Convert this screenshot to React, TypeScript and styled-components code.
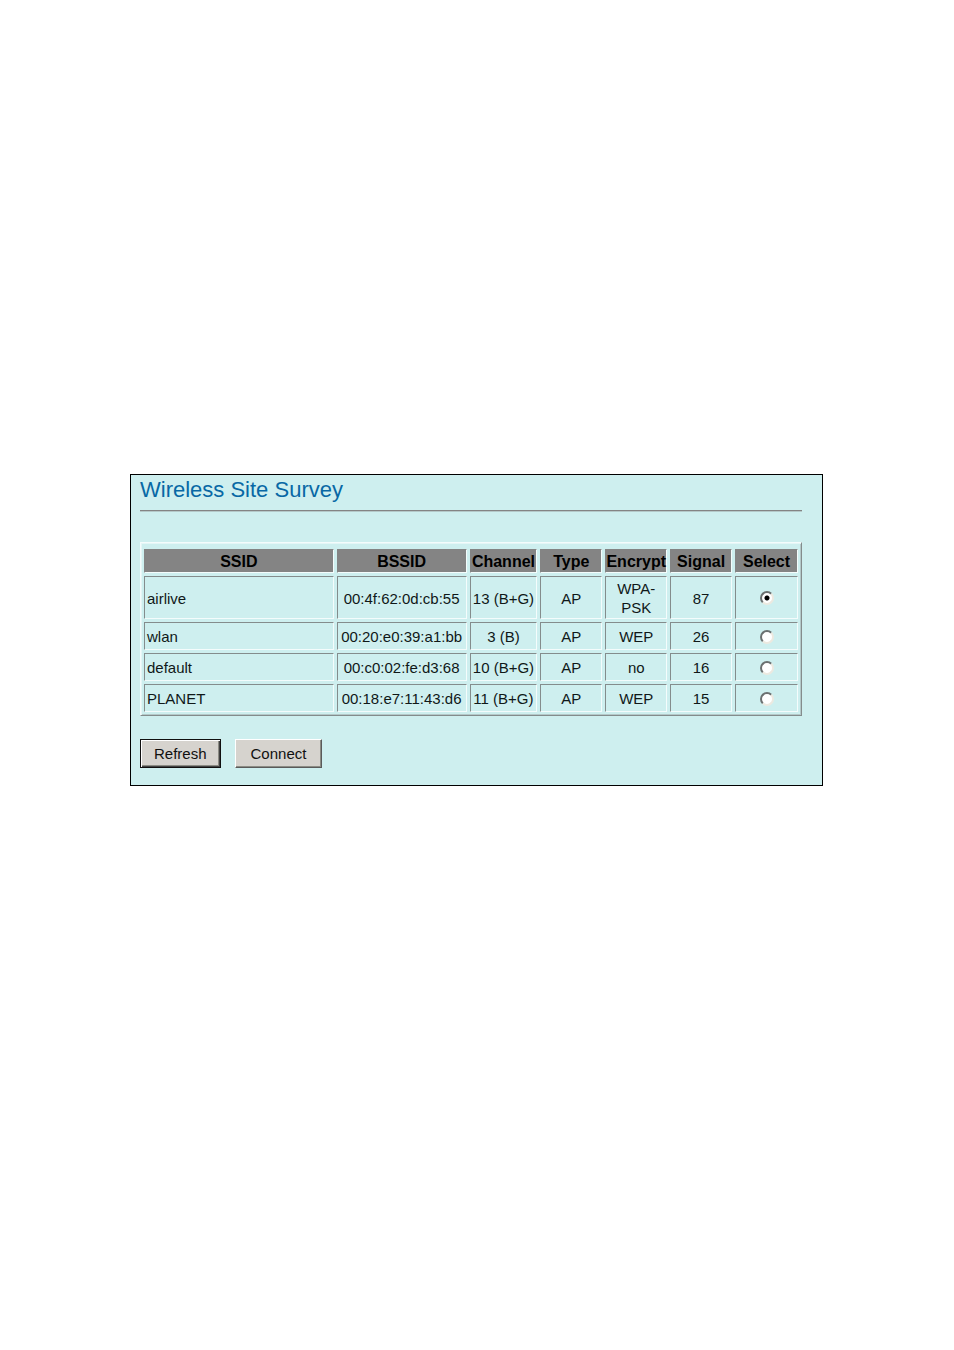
import React from 'react'
import styled, { createGlobalStyle } from 'styled-components'

interface INetwork{ssid:string,bssid:string,channel:string,type:string,encrypt:string,signal:number}

const networks:Array<INetwork> = [
  {ssid:'airlive',bssid:'00:4f:62:0d:cb:55',channel:'13 (B+G)',type:'AP',encrypt:'WPA-PSK',signal:87},
  {ssid:'wlan',bssid:'00:20:e0:39:a1:bb',channel:'3 (B)',type:'AP',encrypt:'WEP',signal:26},
  {ssid:'default',bssid:'00:c0:02:fe:d3:68',channel:'10 (B+G)',type:'AP',encrypt:'no',signal:16},
  {ssid:'PLANET',bssid:'00:18:e7:11:43:d6',channel:'11 (B+G)',type:'AP',encrypt:'WEP',signal:15}
]
const columns = [
  {title:'SSID',share:190},
  {title:'BSSID',share:130},
  {title:'Channel',share:68},
  {title:'Type',share:62},
  {title:'Encrypt',share:62},
  {title:'Signal',share:62},
  {title:'Select',share:63}
]
const totalShare = columns.reduce((sum,column)=>sum+column.share,0)

class App extends React.Component<{},{selected:string}>{
  constructor(props:any){
    super(props);
    this.state={
      selected: networks[0].bssid
    }
  }
  selectHandler(bssid:string){
    this.setState({selected:bssid})
  }
  render(){
    let rowsJSX = networks.map((network:INetwork)=>{
      return <Row key={network.bssid}>
        <Cell align="left">{network.ssid}</Cell>
        <Cell>{network.bssid}</Cell>
        <Cell>{network.channel}</Cell>
        <Cell>{network.type}</Cell>
        <Cell wrapText>{network.encrypt}</Cell>
        <Cell>{network.signal}</Cell>
        <Cell>
          <Radio
            type="radio"
            name="network"
            aria-label={network.ssid}
            checked={this.state.selected==network.bssid}
            onChange={this.selectHandler.bind(this,network.bssid)}
          />
        </Cell>
      </Row>
    })
    return(
      <Page>
        <GlobalStyle/>
        <Panel>
          <Title>Wireless Site Survey</Title>
          <Divider/>
          <SurveyTable>
            <colgroup>
              {columns.map((column)=><Col key={column.title} share={column.share}/>)}
            </colgroup>
            <thead>
              <tr>
                {columns.map((column)=><HeadCell key={column.title} scope="col">{column.title}</HeadCell>)}
              </tr>
            </thead>
            <tbody>{rowsJSX}</tbody>
          </SurveyTable>
          <ButtonBar>
            <DefaultButton type="button">Refresh</DefaultButton>
            <StyledButton type="button">Connect</StyledButton>
          </ButtonBar>
        </Panel>
      </Page>
    )
  }
}
const GlobalStyle = createGlobalStyle`
  body{
    margin: 0;
    background: #fff;
    color: #101818;
    font-family: "Liberation Sans", Arial, sans-serif;
    font-size: 15px;
    line-height: 19px;
  }
  *{
    box-sizing: border-box;
  }
`
const Page = styled('main')`
  padding: 474px 131px 474px 130px;
`
const Panel = styled('section')`
  padding: 2px 20px 17px 9px;
  border: 1px solid #000;
  background: #ceefef;
`
const Title = styled('h1')`
  margin: 0;
  color: #0868a5;
  font-size: 22px;
  font-weight: normal;
  line-height: 26px;
`
const Divider = styled('hr')`
  height: 2px;
  margin: 7px 0 30px;
  border: 0;
  border-top: 1px solid #848484;
  border-bottom: 1px solid #b4c9c9;
`
const SurveyTable = styled('table')`
  width: 100%;
  padding-top: 3px;
  table-layout: fixed;
  border-collapse: separate;
  border-spacing: 3px;
  border: 1px solid;
  border-color: #f4fcfc #848c8c #848c8c #f4fcfc;
  box-shadow: inset 1px 1px #e4f6f6, inset -1px -1px #b4c9c9;
`
const Col = styled('col').withConfig({shouldForwardProp:(prop)=>prop!='share'})<{share:number}>`
  width: ${(props)=>props.share/totalShare*100}%;
`
const HeadCell = styled('th')`
  height: 24px;
  padding: 0;
  border: 1px solid;
  border-color: #848484 #f4fcfc #f4fcfc #848484;
  background: #848484;
  color: #000;
  font-size: 16px;
`
const Row = styled('tr')`
  height: 28px;
`
const Cell = styled('td').withConfig({shouldForwardProp:(prop)=>prop!='align'&&prop!='wrapText'})<{align?:string,wrapText?:boolean}>`
  padding: 2px 2px 1px;
  border: 1px solid;
  border-color: #848c8c #f4fcfc #f4fcfc #848c8c;
  text-align: ${(props)=>props.align||'center'};
  white-space: ${(props)=>props.wrapText?'normal':'nowrap'};
`
const Radio = styled('input')`
  appearance: none;
  display: block;
  width: 14px;
  height: 14px;
  margin: 0 auto;
  border: 2px solid;
  border-color: #6b7070 #ece9e0 #ece9e0 #6b7070;
  border-radius: 50%;
  background: #fff;
  &:checked{
    background: radial-gradient(circle, #000 2px, #fff 3px);
  }
`
const ButtonBar = styled('div')`
  display: flex;
  gap: 14px;
  margin-top: 23px;
`
const StyledButton = styled('button')`
  height: 29px;
  padding: 0 15px;
  border: 1px solid;
  border-color: #fff #5a5a5a #5a5a5a #fff;
  box-shadow: inset -1px -1px #8c8c84;
  background: #d6d3ce;
  color: #101010;
  font: inherit;
`
const DefaultButton = styled(StyledButton)`
  padding: 0 13px;
  border-color: #101010;
  box-shadow: inset 1px 1px #fff, inset -1px -1px #424242, inset -2px -2px #8c8c84;
`

export default App
